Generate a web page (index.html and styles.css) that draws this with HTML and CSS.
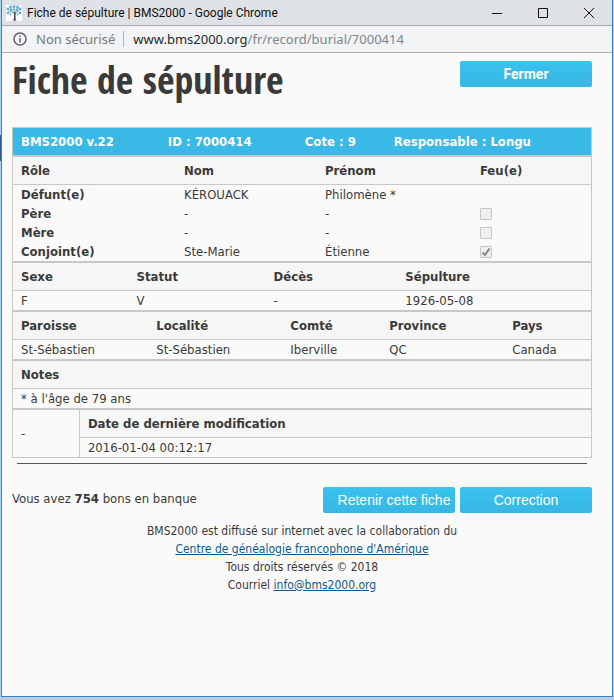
FILE: index.html
```html
<!DOCTYPE html>
<html lang="fr">
<head>
<meta charset="utf-8">
<title>Fiche de sépulture | BMS2000</title>
<link rel="stylesheet" href="styles.css">
</head>
<body>
<div class="window">
  <header class="titlebar">
    <svg class="favicon" viewBox="0 0 16 16" aria-hidden="true">
      <rect width="16" height="16" fill="#fff"/>
      <path d="M2 6l5 2M4 3l4 5M12 3L8 8M14 6L9 8M8 3v6" stroke="#5b8ca8" stroke-width=".7" fill="none"/>
      <g fill="#5fb0d0">
        <circle cx="2" cy="4" r="1.4"/><circle cx="4.500" cy="2" r="1.400"/><circle cx="8" cy="1.500" r="1.500"/><circle cx="11.500" cy="2" r="1.500"/>
        <circle cx="14" cy="4" r="1.400"/><circle cx="5" cy="5" r="1.500"/><circle cx="11" cy="5" r="1.500"/><circle cx="2" cy="8" r="1.300"/>
        <circle cx="14" cy="8" r="1.300"/><circle cx="4.500" cy="9.500" r="1"/><circle cx="11.500" cy="9.500" r="1"/><circle cx="8" cy="4.300" r="1"/>
      </g>
      <path d="M8 7h1.500v7l1 1.500h-4L8 14z" fill="#3d3a48"/>
    </svg>
    <span class="window-title">Fiche de sépulture | BMS2000 - Google Chrome</span>
    <div class="controls">
      <button type="button" aria-label="Réduire"><svg viewBox="0 0 12 12"><path d="M1 6.500h10"/></svg></button>
      <button type="button" aria-label="Agrandir"><svg viewBox="0 0 12 12"><path d="M1.500 1.500h9v9h-9z"/></svg></button>
      <button type="button" aria-label="Fermer la fenêtre"><svg viewBox="0 0 12 12"><path d="M1 1l10 10M11 1L1 11"/></svg></button>
    </div>
  </header>
  <div class="addressbar">
    <svg class="info" viewBox="0 0 14 14" aria-hidden="true">
      <circle cx="7" cy="7" r="6" fill="none" stroke="#5f6368" stroke-width="1.500"/>
      <path d="M7 6v4.500M7 3.500v1.500" stroke="#5f6368" stroke-width="1.500"/>
    </svg>
    <span class="insecure">Non sécurisé</span>
    <span class="url"><span class="host">www.bms2000.org</span>/fr/record/burial/7000414</span>
  </div>
  <main class="page">
    <div class="heading">
      <h1>Fiche de sépulture</h1>
      <button type="button" class="btn btn-close">Fermer</button>
    </div>

    <table class="summary">
      <colgroup><col class="sum-1"><col class="sum-2"><col class="sum-3"><col></colgroup>
      <tr><th>BMS2000 v.22</th><th>ID : 7000414</th><th>Cote : 9</th><th>Responsable : Longu</th></tr>
    </table>

    <table>
      <colgroup><col class="role-1"><col class="role-2"><col class="role-3"><col></colgroup>
      <thead><tr><th>Rôle</th><th>Nom</th><th>Prénom</th><th>Feu(e)</th></tr></thead>
      <tbody>
        <tr><th>Défunt(e)</th><td>KÉROUACK</td><td>Philomène *</td><td></td></tr>
        <tr><th>Père</th><td>-</td><td>-</td><td><input type="checkbox" disabled aria-label="Père feu"></td></tr>
        <tr><th>Mère</th><td>-</td><td>-</td><td><input type="checkbox" disabled aria-label="Mère feue"></td></tr>
        <tr><th>Conjoint(e)</th><td>Ste-Marie</td><td>Étienne</td><td><span class="tick"><input type="checkbox" checked disabled aria-label="Conjoint feu"><svg viewBox="0 0 12 12" aria-hidden="true"><path d="M2.500 6.500l2.500 2.500 4.500-6.500" fill="none" stroke="#858585" stroke-width="2"/></svg></span></td></tr>
      </tbody>
    </table>

    <table>
      <colgroup><col class="event-1"><col class="event-2"><col class="event-3"><col></colgroup>
      <thead><tr><th>Sexe</th><th>Statut</th><th>Décès</th><th>Sépulture</th></tr></thead>
      <tbody><tr><td>F</td><td>V</td><td>-</td><td>1926-05-08</td></tr></tbody>
    </table>

    <table>
      <colgroup><col class="place-1"><col class="place-2"><col class="place-3"><col class="place-4"><col></colgroup>
      <thead><tr><th>Paroisse</th><th>Localité</th><th>Comté</th><th>Province</th><th>Pays</th></tr></thead>
      <tbody><tr><td>St-Sébastien</td><td>St-Sébastien</td><td>Iberville</td><td>QC</td><td>Canada</td></tr></tbody>
    </table>

    <table>
      <thead><tr><th>Notes</th></tr></thead>
      <tbody><tr><td>* à l'âge de 79 ans</td></tr></tbody>
    </table>

    <table class="modified">
      <colgroup><col class="mod-1"><col></colgroup>
      <tbody>
        <tr><td rowspan="2">-</td><th class="label">Date de dernière modification</th></tr>
        <tr><td class="date">2016-01-04 00:12:17</td></tr>
      </tbody>
    </table>

    <hr>

    <div class="actions">
      <p>Vous avez <strong>754</strong> bons en banque</p>
      <button type="button" class="btn btn-keep">Retenir cette fiche</button>
      <button type="button" class="btn">Correction</button>
    </div>

    <footer>
      <p>BMS2000 est diffusé sur internet avec la collaboration du</p>
      <p><a href="#">Centre de généalogie francophone d'Amérique</a></p>
      <p>Tous droits réservés © 2018</p>
      <p>Courriel <a href="mailto:info@bms2000.org">info@bms2000.org</a></p>
    </footer>
  </main>
</div>
</body>
</html>
```
FILE: styles.css
```css
* { box-sizing: border-box; }

body {
  margin: 0;
  min-height: 100vh;
  display: flex;
  padding: 0 1px 3px;
  background:
    linear-gradient(#2c5a94, #2c5a94) 0 135px / 1px 26px no-repeat,
    linear-gradient(#a9d5f5 690px, #b9cde6 696px);
  color: #3a3a3a;
  font: 13px/19px "DejaVu Sans Condensed", "DejaVu Sans", sans-serif;
}

.window {
  flex: 1;
  border: 1px solid #3a80bd;
  border-top: 0;
  background: #fafafa;
}

.titlebar {
  display: flex;
  align-items: center;
  height: 26px;
  padding-left: 4px;
  background: #dee1e6;
  border-bottom: 1px solid #a9abae;
  color: #111;
  font: 12px/16px Roboto, sans-serif;
}

.favicon { width: 16px; height: 16px; margin-right: 5px; }
.window-title { flex: 1; white-space: nowrap; }
.controls { display: flex; }

.controls button {
  width: 46px;
  height: 25px;
  padding: 0;
  border: 0;
  background: none;
  display: grid;
  place-items: center;
}

.controls svg { width: 12px; height: 12px; fill: none; stroke: #111; stroke-width: 1; }

.addressbar {
  display: flex;
  align-items: center;
  height: 27px;
  padding-left: 11px;
  background: #f1f3f4;
  border-bottom: 1px solid #a9abae;
  color: #80868b;
  font: 13px/18px "Noto Sans", sans-serif;
  white-space: nowrap;
}

.info { width: 14px; height: 14px; margin-right: 9px; }
.insecure { padding-right: 8px; border-right: 1px solid #b4b6b9; line-height: 16px; color: #75797d; }
.url { padding-left: 9px; }
.host { color: #27292c; }

.page { padding: 8px 20px 20px 10px; }

.heading {
  display: flex;
  justify-content: space-between;
  align-items: flex-start;
  height: 66px;
}

h1 {
  margin: 0;
  font: bold 38px/36px "Liberation Sans Narrow", "Open Sans Condensed", sans-serif;
  white-space: nowrap;
}

.btn {
  width: 132px;
  height: 26px;
  padding: 0;
  border: 0;
  border-radius: 2px;
  background: linear-gradient(#3ac2ef, #37b6e3);
  color: #fff;
  font: 14px/26px "Liberation Sans", sans-serif;
  white-space: nowrap;
}

.btn-close { font-family: Roboto, sans-serif; font-weight: bold; }
.btn-keep { padding-left: 10px; }

table {
  width: 100%;
  table-layout: fixed;
  border: 1px solid #c8c8c8;
  border-spacing: 0;
}

th, td { height: 19px; padding: 0 8px; text-align: left; vertical-align: middle; }
thead th, .summary th, .label { height: 27px; background: #f6f6f6; }
.summary th { background: #38b9e6; color: #fff; }
thead th, .label { border-bottom: 1px solid #c8c8c8; height: 28px; }
.label, .date { border-left: 1px solid #c8c8c8; }

.sum-1 { width: 25.4%; }
.sum-2 { width: 23.7%; }
.sum-3 { width: 15.4%; }
.role-1 { width: 28.2%; }
.role-2 { width: 24.4%; }
.role-3 { width: 26.8%; }
.event-1 { width: 20%; }
.event-2 { width: 23.7%; }
.event-3 { width: 22.8%; }
.place-1 { width: 23.4%; }
.place-2 { width: 23.2%; }
.place-3 { width: 17.1%; }
.place-4 { width: 21.3%; }
.mod-1 { width: 11.4%; }

input {
  appearance: none;
  display: block;
  width: 12px;
  height: 12px;
  margin: 0;
  border: 1px solid #c6c6c6;
  border-radius: 1px;
  background: #efefef;
}

.tick { position: relative; display: block; width: 12px; }
.tick svg { position: absolute; inset: 0; }

hr { margin: 5px 5px 23px; border: 0; border-top: 1px solid #555; }

.actions { display: flex; gap: 5px; }
.actions p { flex: 1; margin: 0; line-height: 24px; white-space: nowrap; }

footer { margin-top: 9px; text-align: center; font-size: 12px; line-height: 18px; }
footer p { margin: 0; }
a { color: #0b5a96; }
```
